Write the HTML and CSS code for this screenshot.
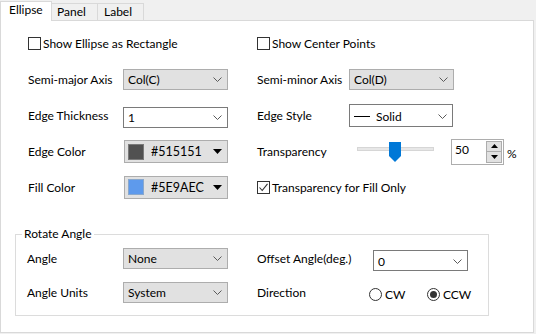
FILE: index.html
```html
<!DOCTYPE html>
<html>
<head>
<meta charset="utf-8">
<link rel="stylesheet" href="styles.css">
</head>
<body>
<div class="tabs">
  <div class="tab active">Ellipse</div>
  <div class="tab">Panel</div>
  <div class="tab tab-label">Label</div>
</div>
<div class="panel">
  <div class="row r1">
    <div class="half-l"><span class="check"><span class="cb"></span>Show Ellipse as Rectangle</span></div>
    <div class="half-r"><span class="check"><span class="cb"></span>Show Center Points</span></div>
  </div>
  <div class="row r2">
    <div class="half-l"><span class="lbl-l">Semi-major Axis</span>
      <div class="combo gray"><span>Col(C)</span><svg class="chev" width="9" height="5" viewBox="0 0 9 5"><path d="M0.5 0.5 L4.5 4.5 L8.5 0.5"/></svg></div>
    </div>
    <div class="half-r"><span class="lbl-r">Semi-minor Axis</span>
      <div class="combo gray"><span>Col(D)</span><svg class="chev" width="9" height="5" viewBox="0 0 9 5"><path d="M0.5 0.5 L4.5 4.5 L8.5 0.5"/></svg></div>
    </div>
  </div>
  <div class="row r3">
    <div class="half-l"><span class="lbl-l">Edge Thickness</span>
      <div class="combo white thick"><span>1</span><svg class="chev" width="9" height="5" viewBox="0 0 9 5"><path d="M0.5 0.5 L4.5 4.5 L8.5 0.5"/></svg></div>
    </div>
    <div class="half-r"><span class="lbl-r">Edge Style</span>
      <div class="combo white style"><span class="style-val"><span class="line"></span>Solid</span><svg class="chev" width="9" height="5" viewBox="0 0 9 5"><path d="M0.5 0.5 L4.5 4.5 L8.5 0.5"/></svg></div>
    </div>
  </div>
  <div class="row r4">
    <div class="half-l"><span class="lbl-l">Edge Color</span>
      <div class="colorbtn"><span class="swatch dark"></span><span class="ctext">#515151</span><svg class="tri" width="9" height="5" viewBox="0 0 9 5"><path d="M0 0 H9 L4.5 5 Z"/></svg></div>
    </div>
    <div class="half-r"><span class="lbl-t">Transparency</span>
      <div class="slider"><div class="track"></div><svg class="thumb" width="12" height="20" viewBox="0 0 12 20"><path d="M0 0 H12 V14 L6 20 L0 14 Z"/></svg></div>
      <div class="spin"><span class="spin-val">50</span><div class="spin-btns"><div class="sb"><svg width="7" height="4" viewBox="0 0 7 4"><path d="M3.5 0 L7 4 H0 Z"/></svg></div><div class="sb"><svg width="7" height="4" viewBox="0 0 7 4"><path d="M0 0 H7 L3.5 4 Z"/></svg></div></div></div>
      <span class="pct">%</span>
    </div>
  </div>
  <div class="row r5">
    <div class="half-l"><span class="lbl-l">Fill Color</span>
      <div class="colorbtn"><span class="swatch blue"></span><span class="ctext">#5E9AEC</span><svg class="tri" width="9" height="5" viewBox="0 0 9 5"><path d="M0 0 H9 L4.5 5 Z"/></svg></div>
    </div>
    <div class="half-r"><span class="check"><span class="cb checked"><svg width="11" height="11" viewBox="0 0 11 11"><path d="M1.5 5.5 L4.2 8.5 L9.5 1.8"/></svg></span>Transparency for Fill Only</span></div>
  </div>
  <fieldset class="group">
    <legend>Rotate Angle</legend>
    <div class="grow g1">
      <span class="glbl">Angle</span>
      <div class="combo gray"><span>None</span><svg class="chev" width="9" height="5" viewBox="0 0 9 5"><path d="M0.5 0.5 L4.5 4.5 L8.5 0.5"/></svg></div>
      <span class="glbl-r offset-lbl">Offset Angle(deg.)</span>
      <div class="combo white offset"><span>0</span><svg class="chev" width="9" height="5" viewBox="0 0 9 5"><path d="M0.5 0.5 L4.5 4.5 L8.5 0.5"/></svg></div>
    </div>
    <div class="grow g2">
      <span class="glbl">Angle Units</span>
      <div class="combo gray"><span>System</span><svg class="chev" width="9" height="5" viewBox="0 0 9 5"><path d="M0.5 0.5 L4.5 4.5 L8.5 0.5"/></svg></div>
      <span class="glbl-r dir-lbl">Direction</span>
      <span class="radio-opt cw"><span class="radio"></span>CW</span>
      <span class="radio-opt"><span class="radio on"><span class="dot"></span></span>CCW</span>
    </div>
  </fieldset>
</div>
</body>
</html>
```
FILE: styles.css
```css
* { box-sizing: border-box; }
body {
  margin: 0;
  background: #f0f0f0;
  font-family: Lato, "Noto Sans", sans-serif;
  font-size: 12px;
  color: #000;
  width: 536px;
  height: 334px;
  overflow: hidden;
}
.tabs {
  display: flex;
  height: 20px;
  align-items: flex-end;
}
.tab {
  height: 17px;
  width: 47px;
  margin-left: -1px;
  border: 1px solid #d9d9d9;
  border-bottom: 0;
  background: #f0f0f0;
  padding-left: 5px;
  line-height: 16px;
}
.tab-label { padding-left: 6px; }
.tab.active {
  width: 52px;
  height: 20px;
  margin-left: 0;
  margin-bottom: -1px;
  background: #fff;
  position: relative;
  z-index: 1;
  padding-left: 8px;
  line-height: 16px;
}
.panel {
  width: 534px;
  height: 313px;
  border: 1px solid #d9d9d9;
  background: #fff;
  padding-top: 5px;
}
.row { display: flex; align-items: center; }
.r1 { height: 35px; }
.r2 { height: 36px; }
.r3 { height: 37px; }
.r4 { height: 35px; }
.r5 { height: 36px; }
.half-l {
  width: 256px;
  padding-left: 27px;
  display: flex;
  align-items: center;
}
.half-r { display: flex; align-items: center; }
.lbl-l { width: 95px; }
.lbl-r { width: 92px; }
.lbl-t { width: 100px; }

.check { display: flex; align-items: center; }
.cb {
  width: 13px;
  height: 13px;
  border: 1px solid #333;
  background: #fff;
  margin-right: 2px;
  display: flex;
  align-items: center;
  justify-content: center;
}
.cb svg path { fill: none; stroke: #333; stroke-width: 1.1; }

.combo {
  width: 105px;
  height: 21px;
  display: flex;
  align-items: center;
  justify-content: space-between;
  padding: 1px 5px 0 4px;
}
.combo.gray { background: #e1e1e1; border: 1px solid #adadad; }
.combo.white { background: #fff; border: 1px solid #7a7a7a; }
.combo.thick { margin-top: 3px; }
.combo.style { height: 23px; width: 104px; }
.combo.offset { width: 95px; }
.chev path { fill: none; stroke: #5a5a5a; stroke-width: 1; }
.style-val { display: flex; align-items: center; }
.line { width: 16px; height: 1px; background: #000; margin: 0 6px 0 0; }

.colorbtn {
  width: 104px;
  height: 23px;
  margin-left: 1px;
  background: #e1e1e1;
  border: 1px solid #adadad;
  display: flex;
  align-items: center;
  padding-left: 3px;
}
.swatch {
  width: 16px;
  height: 16px;
  border: 1px solid #7a7a7a;
}
.swatch.dark { background: #515151; }
.swatch.blue { background: #5e9aec; border-color: #8aa8cc; }
.ctext { margin-left: 7px; width: 62px; font-size: 12.5px; }
.tri { margin-left: 0; }
.tri path { fill: #000; }

.slider {
  width: 77px;
  height: 20px;
  display: flex;
  align-items: center;
  position: relative;
}
.track {
  width: 77px;
  height: 4px;
  margin-top: -5px;
  background: #e7e7e7;
  border: 1px solid #d6d6d6;
}
.thumb { position: absolute; left: 32px; top: 0; }
.thumb path { fill: #0078d7; }
.spin {
  margin-left: 17px;
  width: 53px;
  height: 26px;
  border: 1px solid #adadad;
  background: #fff;
  display: flex;
  justify-content: space-between;
}
.spin-val { padding: 3px 0 0 3px; line-height: 14px; }
.spin-btns {
  width: 17px;
  display: flex;
  flex-direction: column;
  padding: 1px 1px 1px 0;
  gap: 0;
}
.sb {
  flex: 1;
  background: #e1e1e1;
  border: 1px solid #adadad;
  display: flex;
  align-items: center;
  justify-content: center;
}
.sb + .sb { border-top: 0; }
.sb path { fill: #000; }
.pct { margin-left: 3px; margin-top: 4px; }

.group {
  margin: 21px 0 0 14px;
  width: 474px;
  min-width: 0;
  border: 1px solid #dcdcdc;
  padding: 0 0 5px 0;
}
.group legend {
  padding: 0 2px;
  margin-left: 6px;
  line-height: 16px;
}
.grow { display: flex; align-items: center; padding-left: 11px; }
.g1 { height: 32px; }
.g2 { height: 36px; }
.glbl { width: 96px; }
.glbl-r { margin-left: 29px; }
.offset-lbl { width: 116px; }
.combo.offset { margin-top: 5px; }
.dir-lbl { width: 112px; }
.radio-opt { display: flex; align-items: center; margin-top: 5px; }
.radio-opt.cw { width: 58px; }
.radio {
  width: 13px;
  height: 13px;
  border: 1px solid #333;
  border-radius: 50%;
  margin-right: 3px;
  display: flex;
  align-items: center;
  justify-content: center;
}
.dot { width: 7px; height: 7px; border-radius: 50%; background: #333; }
```
